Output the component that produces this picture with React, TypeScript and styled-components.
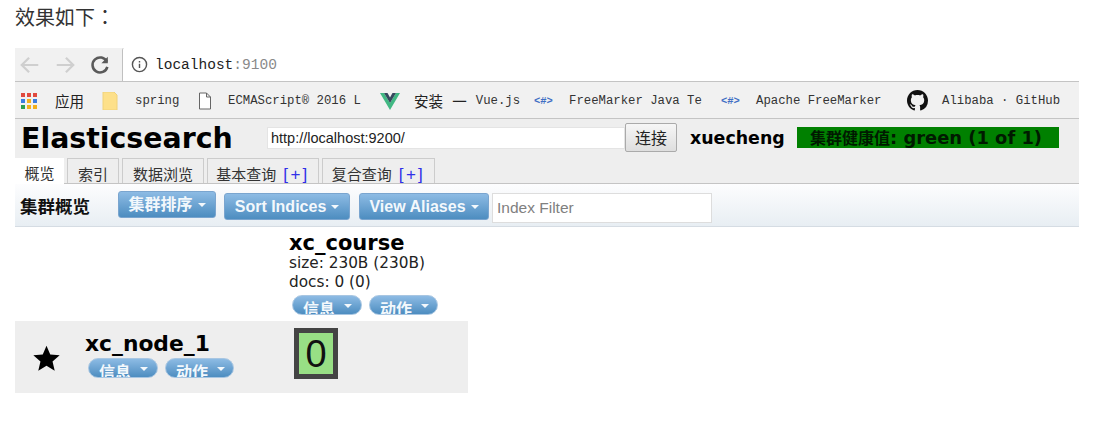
import React from "react";
import styled, { createGlobalStyle } from "styled-components";

const cjk = '"Noto Sans CJK SC", sans-serif';
const GlobalStyle = createGlobalStyle`
  html, body { margin: 0; padding: 0; background: #fff; }
  body { width: 1108px; height: 423px; overflow: hidden; font-family: "Liberation Sans", ${cjk}; }
`;

const Page = styled.div`
  padding: 0 29px 0 15px;
`;
const Intro = styled.p`
  margin: 0;
  height: 48px;
  padding-top: 2px;
  box-sizing: border-box;
  font-size: 20px;
  line-height: 30px;
  color: #333;
  font-family: "Noto Sans CJK TC", sans-serif;
`;
const BrowserBar = styled.div`
  display: flex;
  height: 34px;
  background: #f1f1f1;
  border-bottom: 1px solid #c4c4c4;
  box-sizing: border-box;
`;
const NavButtons = styled.div`
  display: flex;
  align-items: center;
  width: 107px;
  padding-left: 4px;
  box-sizing: border-box;
  gap: 13px;
`;
const AddressBar = styled.div`
  flex: 1;
  display: flex;
  align-items: center;
  background: #fff;
  border-left: 1px solid #c0c0c0;
  padding-left: 8px;
  gap: 7px;
  border-radius: 2px 0 0 0;
`;
const Host = styled.span`
  font: 14.5px "Liberation Mono", monospace;
  color: #222;
  span { color: #8a8a8a; }
`;
const Bookmarks = styled.div`
  display: flex;
  align-items: center;
  height: 37px;
  background: #f1f1f1;
  border-bottom: 1px solid #c4c4c4;
  box-sizing: border-box;
  padding: 1px 0 0 6px;
`;
const Bookmark = styled.span<{ $w: number }>`
  display: inline-flex;
  align-items: center;
  width: ${(p) => p.$w}px;
  flex: none;
  gap: 8px;
  overflow: hidden;
  white-space: nowrap;
`;
const Mono = styled.span<{ $left?: number }>`
  font: 12.3px "Liberation Mono", monospace;
  color: #333;
  margin-left: ${(p) => p.$left ?? 0}px;
`;
const CnLabel = styled.span<{ $left?: number }>`
  font: 14.5px ${cjk};
  color: #222;
  word-spacing: 6px;
  margin-left: ${(p) => p.$left ?? 0}px;
`;
const Hash = styled.span`
  font: bold 10.5px "Liberation Mono", monospace;
  color: #3f6fc4;
  width: 26px;
  flex: none;
`;
const AppHeader = styled.div`
  display: flex;
  align-items: center;
  height: 36px;
  background: #eee;
`;
const Title = styled.h1`
  margin: 3px 0 0 6px;
  width: 246px;
  font: bold 28.4px "DejaVu Sans", sans-serif;
  color: #000;
  white-space: nowrap;
`;
const UrlInput = styled.div`
  width: 358px;
  height: 22px;
  margin-top: 2px;
  background: #fff;
  border: 1px solid #e4e4e4;
  box-sizing: border-box;
  padding-left: 3px;
  font-size: 14.5px;
  line-height: 20px;
  color: #222;
`;
const Connect = styled.div`
  width: 52px;
  height: 29px;
  margin-top: 1px;
  box-sizing: border-box;
  border: 1px solid #aaa;
  border-radius: 2px;
  background: linear-gradient(#f6f6f6, #dedede);
  text-align: center;
  font: 16px/27px ${cjk};
  color: #222;
`;
const ClusterName = styled.span`
  margin: 1px 0 0 13px;
  width: 107px;
  font: bold 17.4px "DejaVu Sans", sans-serif;
  color: #000;
`;
const Health = styled.div`
  width: 262px;
  height: 21px;
  background: #008000;
  color: #001a00;
  box-sizing: border-box;
  padding-left: 13px;
  font: bold 17.9px/21px "DejaVu Sans", sans-serif;
  white-space: nowrap;
  span { font: bold 16px/0 ${cjk}; }
`;
const Tabs = styled.div`
  display: flex;
  height: 29px;
  background: #eee;
  border-bottom: 1px solid #c4c4c4;
  box-sizing: border-box;
  gap: 3px;
`;
const Tab = styled.div<{ $active?: boolean; $w: number }>`
  width: ${(p) => p.$w}px;
  height: ${(p) => (p.$active ? 26 : 25)}px;
  margin-top: 3px;
  box-sizing: border-box;
  background: ${(p) => (p.$active ? "#fff" : "#eee")};
  border: 1px solid #ccc;
  border-bottom: 0;
  ${(p) => p.$active && "border: 0;"}
  font: 15px/30px ${cjk};
  color: #333;
  text-align: center;
  white-space: nowrap;
  overflow: hidden;
  b { font: 400 17px/0 "Liberation Sans", sans-serif; color: #3030e8; letter-spacing: 2.300px; margin-left: 7px; }
`;
const Toolbar = styled.div`
  display: flex;
  align-items: center;
  height: 43px;
  background: linear-gradient(#fdfdfe, #e8eef3);
  border-bottom: 1px solid #d5dce3;
  box-sizing: border-box;
`;
const ToolbarLabel = styled.span`
  margin-left: 5px;
  width: 98px;
  font: bold 17.500px ${cjk};
  color: #111;
  white-space: nowrap;
`;
const MenuButton = styled.div<{ $w: number; $drop?: number }>`
  display: inline-flex;
  align-items: center;
  justify-content: center;
  gap: 5px;
  width: ${(p) => p.$w}px;
  height: 27px;
  margin-top: ${(p) => p.$drop ?? 0}px;
  box-sizing: border-box;
  border-radius: 3px;
  border: 1px solid #7aa5cf;
  background: linear-gradient(#8dbbe4, #4d8dc0);
  color: #f3f8fc;
  font: bold 16px/1 "Liberation Sans", ${cjk};
  white-space: nowrap;
  flex: none;
  &::after {
    content: "";
    border: 4px solid transparent;
    border-top: 4px solid #f3f8fc;
    border-bottom: 0;
  }
`;
const PillButton = styled.div<{ $w: number }>`
  display: flex;
  gap: 9px;
  width: ${(p) => p.$w}px;
  height: 20px;
  box-sizing: border-box;
  padding-left: 10px;
  border-radius: 10px;
  border: 1px solid #a8c6e2;
  background: linear-gradient(#8dbbe4, #4d8dc0);
  color: #f3f8fc;
  font: bold 16px/24px ${cjk};
  overflow: hidden;
  white-space: nowrap;
  flex: none;
  &::after {
    content: "";
    height: 0;
    margin-top: 8px;
    border: 4.500px solid transparent;
    border-top: 4.500px solid #f3f8fc;
    border-bottom: 0;
  }
`;
const ButtonRow = styled.div<{ $gap: number; $left?: number; $top?: number }>`
  display: flex;
  gap: ${(p) => p.$gap}px;
  margin-left: ${(p) => p.$left ?? 0}px;
  margin-top: ${(p) => p.$top ?? 0}px;
`;
const Filter = styled.div`
  width: 220px;
  height: 30px;
  background: #fff;
  border: 1px solid #ddd;
  box-sizing: border-box;
  margin: 6px 0 0 3px;
  padding-left: 4px;
  font-size: 15.500px;
  line-height: 27px;
  color: #808080;
`;
const Cluster = styled.div`
  width: 453px;
`;
const IndexRow = styled.div`
  height: 94px;
  padding-left: 274px;
  box-sizing: border-box;
`;
const IndexName = styled.div`
  font: bold 21px/21px "DejaVu Sans", sans-serif;
  padding-top: 6px;
  color: #000;
`;
const Meta = styled.div`
  font: 15.300px/19px "DejaVu Sans", sans-serif;
  color: #222;
`;
const NodeRow = styled.div`
  display: flex;
  height: 72px;
  background: #eee;
`;
const Star = styled.svg`
  width: 29px;
  height: 29px;
  margin: 23px 0 0 17px;
  flex: none;
`;
const NodeInfo = styled.div`
  width: 233px;
  padding: 9px 0 0 24px;
  box-sizing: border-box;
`;
const NodeName = styled.div`
  font: bold 21.800px/28px "DejaVu Sans", sans-serif;
  color: #000;
`;
const Shard = styled.div`
  width: 44px;
  height: 51px;
  margin-top: 7px;
  box-sizing: border-box;
  border: 5px solid #444;
  background: #98df85;
  color: #111;
  text-align: center;
  font: 38px/43px "Liberation Sans", sans-serif;
`;

const Grid = () => (
  <svg width="16" height="16" viewBox="0 0 16 16" style={{ flex: "none" }}>
    {["#e04a3f", "#e04a3f", "#e04a3f", "#3b7de0", "#f2b01e", "#3b7de0", "#2f9e4f", "#f2b01e", "#f2b01e"].map((c, i) => (
      <rect key={i} x={(i % 3) * 6} y={Math.floor(i / 3) * 6} width="4" height="4" fill={c} />
    ))}
  </svg>
);

export default function App() {
  return (
    <Page>
      <GlobalStyle />
      <Intro>效果如下：</Intro>
      <BrowserBar>
        <NavButtons>
          <svg width="22" height="22" viewBox="0 0 24 24" fill="none" stroke="#cfcfcf" strokeWidth="2.4">
            <path d="M21 12H4M11 4l-8 8 8 8" />
          </svg>
          <svg width="22" height="22" viewBox="0 0 24 24" fill="none" stroke="#cfcfcf" strokeWidth="2.4">
            <path d="M3 12h17M13 4l8 8-8 8" />
          </svg>
          <svg width="22" height="22" viewBox="0 0 24 24" fill="none" stroke="#5a5a5a" strokeWidth="2.800">
            <path d="M19.500 8.500A8.200 8.200 0 1 0 20 14" />
            <path d="M20.500 3v7h-7" fill="#5a5a5a" stroke="none" />
          </svg>
        </NavButtons>
        <AddressBar>
          <svg width="17" height="17" viewBox="0 0 24 24" fill="none" stroke="#555" strokeWidth="2">
            <circle cx="12" cy="12" r="10" />
            <path d="M12 11v6M12 7v2" />
          </svg>
          <Host>
            localhost<span>:9100</span>
          </Host>
        </AddressBar>
      </BrowserBar>
      <Bookmarks>
        <Bookmark $w={34}><Grid /></Bookmark>
        <Bookmark $w={47}><CnLabel>应用</CnLabel></Bookmark>
        <Bookmark $w={96}>
          <svg width="16" height="18" viewBox="0 0 16 18" style={{ flex: "none" }}>
            <path d="M1 0h11l3 3v15H1z" fill="#fde08a" stroke="#f0d27a" />
          </svg>
          <Mono $left={9}>spring</Mono>
        </Bookmark>
        <Bookmark $w={182}>
          <svg width="14" height="18" viewBox="0 0 14 18" fill="#fff" stroke="#666" style={{ flex: "none" }}>
            <path d="M1.500 1h7l4 4v12h-11zM8.500 1v4h4" />
          </svg>
          <Mono $left={8}>ECMAScript® 2016 L</Mono>
        </Bookmark>
        <Bookmark $w={154}>
          <svg width="20" height="18" viewBox="0 0 20 18" style={{ flex: "none" }}>
            <path d="M0 1h4l6 10 6-10h4L10 18z" fill="#41b883" />
            <path d="M4 1h3.500L10 5.500 12.500 1H16l-6 10z" fill="#35495e" />
          </svg>
          <CnLabel $left={6}>安装 一</CnLabel>
          <Mono $left={1}>Vue.js</Mono>
        </Bookmark>
        <Bookmark $w={187}>
          <Hash>&lt;#&gt;</Hash>
          <Mono $left={1}>FreeMarker Java Te</Mono>
        </Bookmark>
        <Bookmark $w={186}>
          <Hash>&lt;#&gt;</Hash>
          <Mono $left={1}>Apache FreeMarker</Mono>
        </Bookmark>
        <Bookmark $w={170}>
          <svg width="21" height="21" viewBox="0 0 16 16" fill="#111" style={{ flex: "none" }}>
            <path d="M8 0C3.580 0 0 3.580 0 8c0 3.540 2.290 6.530 5.470 7.590.4.070.55-.17.55-.38 0-.19-.010-.82-.010-1.490-2.010.37-2.530-.49-2.690-.94-.090-.23-.48-.94-.82-1.130-.28-.15-.68-.52-.010-.53.63-.010 1.080.58 1.230.82.72 1.210 1.870.87 2.330.66.070-.52.28-.87.51-1.070-1.780-.2-3.640-.89-3.640-3.950 0-.87.31-1.590.82-2.150-.080-.2-.36-1.020.080-2.120 0 0 .67-.21 2.200.82.64-.18 1.320-.27 2-.27s1.360.09 2 .27c1.530-1.040 2.200-.82 2.200-.82.44 1.100.16 1.920.080 2.120.51.56.82 1.270.82 2.150 0 3.070-1.870 3.750-3.650 3.950.29.25.54.73.54 1.480 0 1.070-.010 1.930-.010 2.200 0 .21.15.46.55.38A8.010 8.010 0 0 0 16 8c0-4.420-3.580-8-8-8z" />
          </svg>
          <Mono $left={6}>Alibaba · GitHub</Mono>
        </Bookmark>
      </Bookmarks>
      <AppHeader>
        <Title>Elasticsearch</Title>
        <UrlInput>http://localhost:9200/</UrlInput>
        <Connect>连接</Connect>
        <ClusterName>xuecheng</ClusterName>
        <Health><span>集群健康值</span>: green (1 of 1)</Health>
      </AppHeader>
      <Tabs>
        <Tab $active $w={49}>概览</Tab>
        <Tab $w={52}>索引</Tab>
        <Tab $w={82}>数据浏览</Tab>
        <Tab $w={112}>基本查询<b>[+]</b></Tab>
        <Tab $w={113}>复合查询<b>[+]</b></Tab>
      </Tabs>
      <Toolbar>
        <ToolbarLabel>集群概览</ToolbarLabel>
        <MenuButton $w={98} $drop={-1}>集群排序</MenuButton>
        <ButtonRow $gap={9} $left={8} $top={3}>
          <MenuButton $w={126}>Sort Indices</MenuButton>
          <MenuButton $w={130}>View Aliases</MenuButton>
        </ButtonRow>
        <Filter>Index Filter</Filter>
      </Toolbar>
      <Cluster>
        <IndexRow>
          <IndexName>xc_course</IndexName>
          <Meta>size: 230B (230B)</Meta>
          <Meta>docs: 0 (0)</Meta>
          <ButtonRow $gap={7} $left={3} $top={3}>
            <PillButton $w={70}>信息</PillButton>
            <PillButton $w={69}>动作</PillButton>
          </ButtonRow>
        </IndexRow>
        <NodeRow>
          <Star viewBox="0 0 24 24">
            <path d="M12 1.500l3.100 7.200 7.800.7-5.900 5.100 1.800 7.600L12 18.100l-6.800 4 1.800-7.600-5.900-5.100 7.800-.7z" fill="#000" />
          </Star>
          <NodeInfo>
            <NodeName>xc_node_1</NodeName>
            <ButtonRow $gap={7} $left={3}>
              <PillButton $w={70}>信息</PillButton>
              <PillButton $w={69}>动作</PillButton>
            </ButtonRow>
          </NodeInfo>
          <Shard>0</Shard>
        </NodeRow>
      </Cluster>
    </Page>
  );
}
